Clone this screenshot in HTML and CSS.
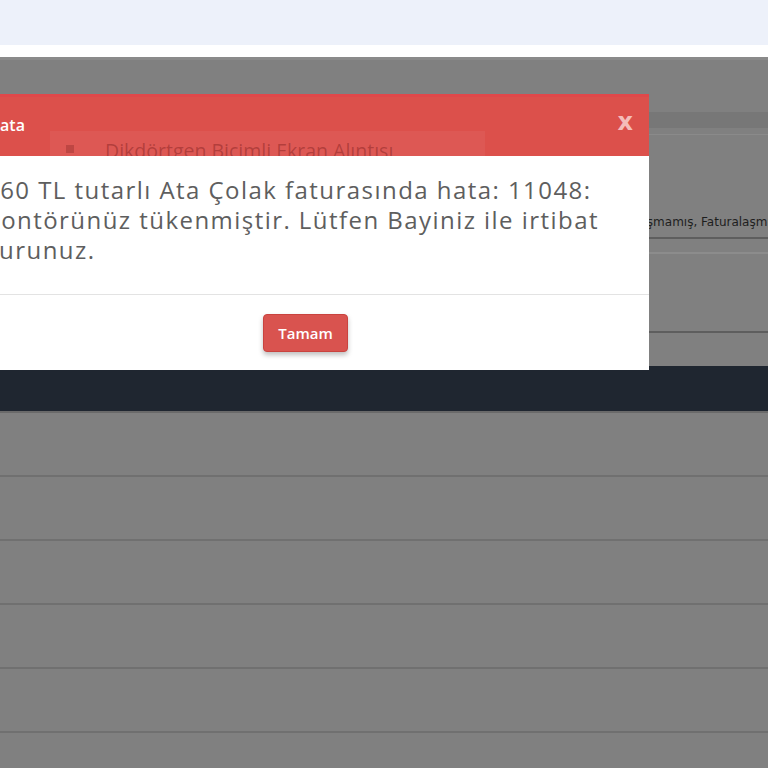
FILE: index.html
```html
<!DOCTYPE html>
<html lang="tr">
<head>
<meta charset="utf-8">
<title>Hata</title>
<link rel="stylesheet" href="styles.css">
</head>
<body>
<div class="topbar"></div>
<div class="whiteband"></div>
<div class="app">
  <div class="upper">
    <div class="card">
      <div class="card-head"></div>
      <div class="card-body">
        <div class="card-line">Faturalaşmamış, Faturalaşmış, Faturalaşmamış, Faturalaşmış, Faturalaşmamış, Faturalaşmış, Faturalaşmamış, Faturalaşmış, Faturalaşmamış, Faturalaşmış</div>
      </div>
      <div class="card-foot"></div>
    </div>
  </div>
  <div class="darkbar"></div>
  <div class="rows">
    <div class="row"></div>
    <div class="row"></div>
    <div class="row"></div>
    <div class="row"></div>
    <div class="row"></div>
    <div class="row"></div>
  </div>
</div>

<div class="modal">
  <div class="modal-head">
    <span class="modal-title">Hata</span>
    <span class="modal-close">x</span>
    <div class="ghost"><span class="ghost-box"></span><span class="ghost-text">Dikdörtgen Biçimli Ekran Alıntısı</span></div>
  </div>
  <div class="modal-body">
    <p class="msg">160 TL tutarlı Ata Çolak faturasında hata: 11048: Kontörünüz tükenmiştir. Lütfen Bayiniz ile irtibat kurunuz.</p>
  </div>
  <div class="modal-foot">
    <button class="btn">Tamam</button>
  </div>
</div>
</body>
</html>
```
FILE: styles.css
```css
html, body {
  margin: 0;
  padding: 0;
}
body {
  width: 768px;
  height: 768px;
  overflow: hidden;
  position: relative;
  background: #808080;
  font-family: "Open Sans", "Noto Sans", sans-serif;
}
.topbar {
  height: 45px;
  background: #edf1fa;
}
.whiteband {
  height: 12px;
  background: #ffffff;
}
.app {
  background: #808080;
}
.upper {
  height: 309px;
  border-top: 3px solid #8a8a8a;
  box-sizing: border-box;
  padding-top: 52px;
}
.card-head {
  height: 16px;
  background: #777777;
}
.card-body {
  border-top: 1px solid #8a8a8a;
  margin-top: 6px;
  height: 105px;
  box-sizing: border-box;
  display: flex;
  align-items: flex-end;
  justify-content: flex-end;
  overflow: hidden;
  border-bottom: 2px solid #5e5e5e;
}
.card-line {
  white-space: nowrap;
  font-family: "DejaVu Sans", sans-serif;
  font-size: 12px;
  color: #1e1e1e;
  padding-bottom: 8px;
  margin-right: -9px;
}
.card-foot {
  height: 81px;
  border-top: 2px solid #8c8c8c;
  margin-top: 13px;
  border-bottom: 2px solid #5e5e5e;
  box-sizing: border-box;
}
.darkbar {
  height: 47px;
  background: #1f2630;
  border-bottom: 2px solid #6a6a6a;
  box-sizing: border-box;
}
.row {
  height: 64px;
  border-bottom: 2px solid #707070;
  box-sizing: border-box;
  background: #808080;
}

.modal {
  position: absolute;
  top: 94px;
  left: -38px;
  width: 687px;
  height: 276px;
  background: #ffffff;
  display: flex;
  flex-direction: column;
}
.modal-head {
  position: relative;
  height: 62px;
  background: #dc504b;
  display: flex;
  align-items: center;
  justify-content: space-between;
  padding: 0 16px 0 26px;
  box-sizing: border-box;
  overflow: hidden;
  border-top: 3px solid #e0484a;
}
.modal-title {
  color: #ffffff;
  font-size: 16px;
  font-weight: 600;
  margin-top: -3px;
}
.modal-close {
  color: #f4bcb9;
  font-family: "DejaVu Sans", sans-serif;
  font-size: 24px;
  font-weight: bold;
  margin-top: -10px;
  position: relative;
  z-index: 2;
}
.ghost {
  position: absolute;
  left: 88px;
  top: 34px;
  width: 435px;
  height: 40px;
  background: rgba(255, 255, 255, 0.05);
  display: flex;
  align-items: flex-start;
}
.ghost-box {
  width: 8px;
  height: 8px;
  margin-left: 16px;
  margin-top: 14px;
  background: rgba(120, 30, 30, 0.3);
}
.ghost-text {
  margin-left: 31px;
  font-size: 19.5px;
  line-height: 26px;
  color: rgba(120, 25, 25, 0.42);
  white-space: nowrap;
  margin-top: 7px;
}
.modal-body {
  height: 139px;
  border-bottom: 1px solid #e3e3e3;
  box-sizing: border-box;
  padding: 0 20px 0 23px;
}
.msg {
  margin: 0;
  padding-top: 19px;
  font-size: 24px;
  line-height: 30px;
  letter-spacing: 1.45px;
  color: #5e5e5e;
  width: 662px;
}
.modal-foot {
  flex: 1;
  display: flex;
  justify-content: center;
  align-items: center;
}
.btn {
  width: 85px;
  height: 38px;
  background: #d9534f;
  border: 1px solid #c9433f;
  border-radius: 4px;
  color: #ffffff;
  font-family: "Open Sans", sans-serif;
  font-size: 15px;
  font-weight: 600;
  box-shadow: 0 3px 5px rgba(0, 0, 0, 0.25);
}
```
